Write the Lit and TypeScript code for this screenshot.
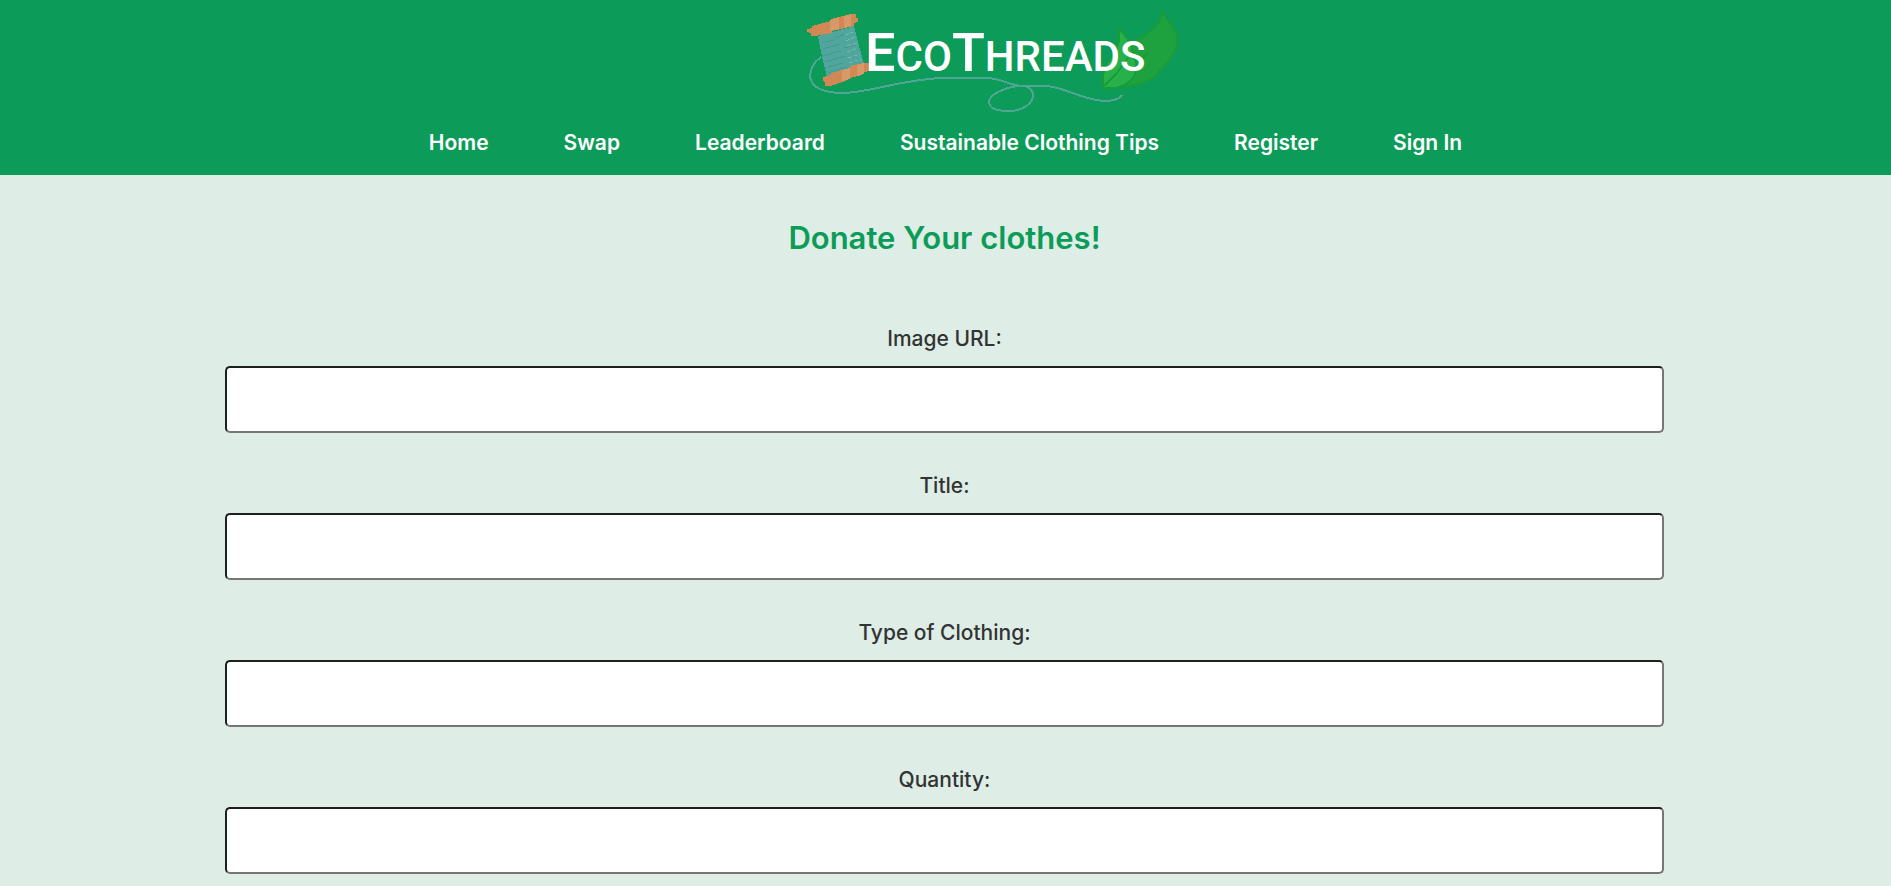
import { LitElement, html, css } from "lit";
import { customElement } from "lit/decorators.js";

@customElement("eco-logo")
class EcoLogo extends LitElement {
  static styles = css`
    :host { display: block; }
    svg { display: block; width: 481px; max-width: 100%; height: auto; }
    .word { font-family: Roboto, "Liberation Sans", sans-serif; font-weight: 500; fill: #fff; text-transform: uppercase; }
    .big { font-size: 54px; }
    .small { font-size: 42px; }
    .thread { fill: none; stroke: #50a596; stroke-width: 2; }
  `;
  render() {
    return html`
      <svg viewBox="705 0 481 120" role="img" aria-label="EcoThreads">
        <g shape-rendering="crispEdges">
          <path class="thread" d="M821 57C814 62 810 69 810 77C812 87 822 93 843 93C873 92 899 80 941 78H988C1003 79 1009 85 1021 86H1046C1066 87 1078 99 1104 101C1113 101 1119 100 1122 95" />
          <path class="thread" d="M1018 86C1003 88 989 95 989 102C990 110 999 111 1010 111C1023 111 1033 103 1033 95C1033 89 1028 86 1022 86" />
          <path fill="#1ea240" stroke="#189d39" stroke-width="2" d="M1162 11C1165 20 1177 27 1177 38C1178 56 1164 65 1154 77C1144 84 1129 87 1119 86L1126 49C1138 36 1161 32 1162 11Z" />
          <path fill="#28b04b" stroke="#189d39" stroke-width="2" d="M1119 28C1124 36 1133 41 1133 55C1140 67 1135 77 1129 82C1120 89 1111 89 1103 88C1101 76 1105 63 1114 55C1119 46 1120 37 1119 28Z" />
          <path fill="none" stroke="#189d39" stroke-width="2" d="M1104 86L1116 74L1128 58M1140 61L1148 53" />
          <path fill="#50a59d" d="M818 36L854 26L858 42L864 64L827 77L822 57Z" />
          <path fill="none" stroke="#469890" stroke-width="1" d="M821 43L834 40M823 49L840 44M822 56L841 51M825 62L846 56M825 68L843 63M828 73L846 67M835 38L845 34M844 48L856 45" />
          <path fill="none" stroke="#71b9b1" stroke-width="1" stroke-dasharray="4 2" d="M845 35L853 32M846 41L855 37M847 46L857 43M847 52L858 48M848 58L860 54M849 63L861 59" />
          <path fill="#d18855" d="M807 29L812 28V26L831 21V19L851 14H856V18H858V22L854 23V26L832 31V33L815 36H811V33L807 32Z" />
          <path fill="#d99867" d="M830 20L839 17V29L830 31ZM844 16L851 14V26L844 28Z" />
          <path fill="#d18855" d="M823 77L831 75V73L850 68V66L863 63H869V71L862 73V75L846 79V81L830 86H825V82L823 81Z" />
          <path fill="#d99867" d="M842 70L850 68V79L842 81ZM857 65L864 63V74L857 76Z" />
        </g>
        <text class="word" x="865" y="71"><tspan class="big">E</tspan><tspan class="small">co</tspan><tspan class="big">T</tspan><tspan class="small">hreads</tspan></text>
      </svg>
    `;
  }
}

@customElement("app-root")
class AppRoot extends LitElement {
  static styles = css`
    * { box-sizing: border-box; }
    :host { display: block; min-height: 100vh; background: #deeee6; color: #333; font-family: Inter, "Open Sans", sans-serif; }
    .header { display: flex; flex-direction: column; align-items: center; background: #0c9b58; }
    .nav { display: flex; flex-wrap: wrap; justify-content: center; gap: 0 75px; padding: 8px 16px 17px; }
    .link { color: #fff; font-size: 21px; line-height: 30px; font-weight: 600; text-decoration: none; }
    .main { padding: 40px 12% 14px calc(12% - 2px); }
    .title { margin: 0 0 64px; color: #0c9b58; font-size: 31px; line-height: 45px; font-weight: 600; text-align: center; }
    .form { display: flex; flex-direction: column; gap: 38px; }
    .field { display: flex; flex-direction: column; gap: 12px; }
    .label { align-self: center; font-size: 21px; line-height: 30px; font-weight: 500; }
    .input { width: 100%; height: 67px; padding: 16px; border: 2px solid; border-color: #1e201f #767676 #767676 #1e201f; border-radius: 5px; background: #fff; color: #333; font: inherit; font-size: 21px; }
  `;
  private links = ["Home", "Swap", "Leaderboard", "Sustainable Clothing Tips", "Register", "Sign In"];
  private fields = [
    { id: "image", label: "Image URL:" },
    { id: "title", label: "Title:" },
    { id: "type", label: "Type of Clothing:" },
    { id: "quantity", label: "Quantity:" },
  ];
  render() {
    return html`
      <header class="header">
        <eco-logo></eco-logo>
        <nav class="nav">${this.links.map((l) => html`<a class="link" href="#">${l}</a>`)}</nav>
      </header>
      <main class="main">
        <h1 class="title">Donate Your clothes!</h1>
        <form class="form">
          ${this.fields.map((f) => html`
            <div class="field">
              <label class="label" for=${f.id}>${f.label}</label>
              <input class="input" id=${f.id} name=${f.id} type="text" />
            </div>`)}
        </form>
      </main>
    `;
  }
}
